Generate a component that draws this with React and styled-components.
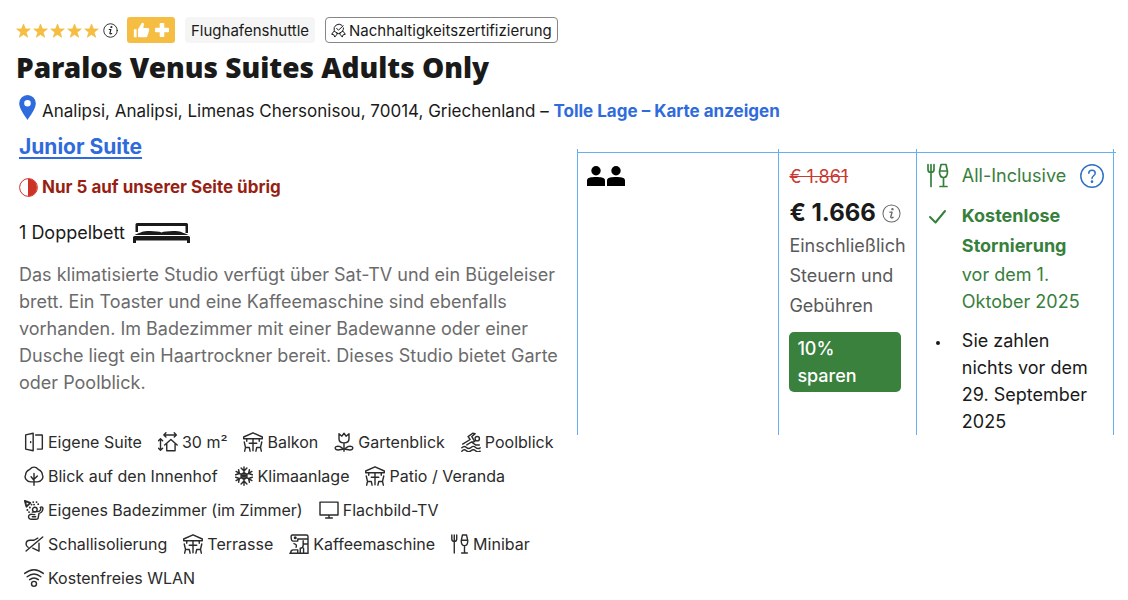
import React from 'react';
import styled, { createGlobalStyle } from 'styled-components';

const GlobalStyle = createGlobalStyle`
  * {
    box-sizing: border-box;
  }

  body {
    margin: 0;
    background: #fff;
    color: #1a1a1a;
    font-family: Inter, "Liberation Sans", sans-serif;
    font-size: 16px;
  }
`;

const Page = styled.main`
  padding: 16px 12px 12px 16px;
`;

const Badges = styled.div`
  display: flex;
  align-items: center;
  height: 28px;
`;

const Stars = styled.div`
  display: flex;
  gap: 2px;
`;

const IconButton = styled.button`
  display: inline-flex;
  flex: none;
  margin: 0;
  padding: 0;
  border: 0;
  background: none;
  color: ${({ $color }) => $color || '#1a1a1a'};
  cursor: pointer;
`;

const StarInfo = styled(IconButton)`
  margin: 0 9px 0 4px;
`;

const Preferred = styled.span`
  display: flex;
  align-items: center;
  gap: 5px;
  height: 26px;
  padding: 0 6px;
  border-radius: 3px;
  background: #f5bd41;
  color: #fff;
`;

const Tag = styled.span`
  display: flex;
  align-items: center;
  gap: 3px;
  height: 26px;
  margin-left: 10px;
  padding: 0 5px;
  border: 1px solid ${({ $outlined }) => ($outlined ? '#868686' : '#f5f5f5')};
  border-radius: 4px;
  background: ${({ $outlined }) => ($outlined ? '#fff' : '#f5f5f5')};
  font-size: 15px;
  white-space: nowrap;
`;

const HotelName = styled.h1`
  margin: 4px 0 0;
  font-family: "Noto Sans", sans-serif;
  font-size: 28px;
  font-weight: 900;
  line-height: 38px;
`;

const Address = styled.p`
  display: flex;
  align-items: flex-start;
  gap: 6px;
  margin: 9px 0 0;
  padding-left: 3px;
  font-size: 17px;
  line-height: 32px;
  white-space: nowrap;
`;

const MapLink = styled.a`
  color: #2f6bdc;
  font-weight: 700;
  text-decoration: none;
`;

const Columns = styled.div`
  display: grid;
  grid-template-columns: minmax(0, 546fr) minmax(0, 539fr);
  gap: 15px;
  margin-top: 6px;
`;

const Room = styled.section`
  padding-left: 3px;
`;

const RoomName = styled.h2`
  margin: 0;
  font-size: 21px;
  font-weight: 700;
  line-height: 28px;

  a {
    color: #2f6bdc;
    text-decoration-thickness: 2px;
    text-underline-offset: 3px;
  }
`;

const Scarcity = styled.p`
  display: flex;
  align-items: center;
  gap: 4px;
  margin: 14px 0 0;
  color: #971f14;
  font-size: 17px;
  font-weight: 700;
  line-height: 24px;
`;

const Bed = styled.p`
  display: flex;
  align-items: center;
  gap: 8px;
  margin: 21px 0 0;
  font-size: 18px;
  line-height: 26px;
`;

const Description = styled.p`
  margin: 15px 0 0;
  color: #6b6b6b;
  font-size: 18px;
  line-height: 27px;
  white-space: pre;
`;

const Amenities = styled.ul`
  display: flex;
  flex-wrap: wrap;
  column-gap: 16px;
  row-gap: 10px;
  margin: 34px 0 0;
  padding: 0 0 0 5px;
  list-style: none;
`;

const Amenity = styled.li`
  display: flex;
  align-items: center;
  gap: 4px;
  color: #2b2b2b;
  font-size: 16px;
  line-height: 24px;
  white-space: nowrap;
`;

const Offer = styled.table`
  width: 100%;
  height: 284px;
  margin-top: 16px;
  padding-right: 2px;
  border-spacing: 0;
  table-layout: fixed;
  background: linear-gradient(#66aff7, #66aff7) 0 3px / 100% 1px no-repeat;
`;

const Cell = styled.td`
  width: ${({ $width }) => $width || 'auto'};
  padding: ${({ $pad }) => $pad};
  border-left: 1px solid #66aff7;
  vertical-align: top;

  &:last-child {
    border-right: 1px solid #66aff7;
  }
`;

const Guests = styled.div`
  display: flex;
  gap: 2px;
`;

const OldPrice = styled.s`
  display: block;
  color: #c93a33;
  font-size: 18px;
  line-height: 24px;
`;

const Price = styled.div`
  display: flex;
  align-items: center;
  gap: 6px;
  margin-top: 10px;
  font-size: 24px;
  font-weight: 700;
  line-height: 28px;
  white-space: nowrap;
`;

const Taxes = styled.div`
  margin-top: 4px;
  color: #595959;
  font-size: 18px;
  line-height: 30px;
`;

const Saving = styled.div`
  margin: 11px 5px 0 0;
  padding: 3px 8px;
  border-radius: 5px;
  background: #3a813e;
  color: #fff;
  font-size: 18px;
  font-weight: 500;
  line-height: 27px;
`;

const Conditions = styled.ul`
  display: grid;
  gap: 12px;
  margin: 0;
  padding: 0;
  list-style: none;
`;

const Condition = styled.li`
  display: grid;
  grid-template-columns: 22px minmax(0, 1fr);
  column-gap: 13px;
  justify-items: start;
  color: ${({ $plain }) => ($plain ? '#1a1a1a' : '#37803b')};
  font-size: 18px;
  line-height: 27px;

  > svg {
    margin-top: 1px;
  }

  b {
    display: block;
    line-height: 30px;
  }
`;

const Meal = styled.div`
  display: flex;
  align-items: center;
  justify-content: space-between;
  width: 100%;
  white-space: nowrap;
`;

const Bullet = styled.span`
  justify-self: center;
  width: 4px;
  height: 4px;
  margin-top: 14px;
  border-radius: 50%;
  background: #1a1a1a;
`;

const Icon = ({ size = 20, width, height, box = '0 0 24 24', stroke = 1.7, children }) => (
  <svg
    width={width || size}
    height={height || size}
    viewBox={box}
    fill="none"
    stroke="currentColor"
    strokeWidth={stroke}
    strokeLinecap="round"
    strokeLinejoin="round"
    aria-hidden="true"
  >
    {children}
  </svg>
);

const StarIcon = () => (
  <svg width="15" height="15" viewBox="1 1 22 21" fill="#f5bd41" stroke="#f5bd41" strokeLinejoin="round" aria-hidden="true">
    <path d="M12 17.3 18.2 21.5 16 14.2 22 9.2H14.9L12 2 9.1 9.2H2l6 5L5.8 21.5z" />
  </svg>
);

const InfoIcon = ({ size, stroke = 1.4 }) => (
  <Icon size={size} stroke={stroke}>
    <circle cx="12" cy="12" r="10.8" />
    <path d="M10 10.300h2.700l-1.600 6c-.2 1.200.8 1.500 2.800.5" strokeWidth="1.800" />
    <circle cx="13.200" cy="6.500" r=".9" fill="currentColor" />
  </Icon>
);

const ThumbIcon = () => (
  <svg width="17" height="16" viewBox="0 0 24 23" fill="currentColor" aria-hidden="true">
    <path d="M1 10.5h4V22H1zM7 21.500V10.500L12 2c.3-1 3.500-1.400 3.500 1.500 0 2-.7 3.700-1 5.300h6.700c1.800 0 2.300 1.700 1.800 3.200l-2.500 8c-.5 1.500-1 2-2.500 2H10z" />
  </svg>
);

const PlusIcon = () => (
  <svg width="14" height="14" viewBox="0 0 14 14" fill="currentColor" aria-hidden="true">
    <path d="M5.500 0h3a.8.8 0 0 1 .8.800V4.700h3.900a.8.8 0 0 1 .8.800v3a.8.8 0 0 1-.8.800H9.300v3.900a.8.8 0 0 1-.8.800h-3a.8.8 0 0 1-.8-.8V9.300H.8a.8.8 0 0 1-.8-.8v-3a.8.8 0 0 1 .8-.8h3.900V.8a.8.8 0 0 1 .8-.8z" />
  </svg>
);

const CertificateIcon = () => (
  <Icon size={15} stroke={1.6}>
    <path d="M17.500 3.500A8 8 0 0 0 5 12M20 8a8 8 0 0 1-1.500 5M9 16.500a8 8 0 0 0 6 0M9 8.500l3 3L19.500 4.500" />
    <path d="M4.500 13.500 1 18l3.500.8L6 22.500l4.500-5.500zM19.500 13.500 23 18l-3.500.8-1.500 3.700-4.500-5.500z" />
  </Icon>
);

const PinIcon = () => (
  <svg width="17" height="25" viewBox="0 0 17 25" fill="#2f6bdc" aria-hidden="true">
    <path fillRule="evenodd" d="M8.500 0A8.300 8.300 0 0 1 16.800 8.500C16.800 14 11 21 8.500 25 6 21 .2 14 .2 8.500A8.300 8.300 0 0 1 8.500 0zm0 5a3.300 3.300 0 1 0 0 6.600 3.300 3.300 0 0 0 0-6.600z" />
  </svg>
);

const HalfIcon = () => (
  <svg width="19" height="19" viewBox="0 0 19 19" aria-hidden="true">
    <circle cx="9.500" cy="9.500" r="8.900" fill="#fff" stroke="#cc3326" />
    <path d="M9 0.500a9 9 0 0 1 0 18z" fill="#cc3326" />
  </svg>
);

const BedIcon = () => (
  <svg width="57" height="20" viewBox="0 0 57 20" fill="#1a1a1a" aria-hidden="true">
    <path fillRule="evenodd" d="M4 0h49.500q1.500 0 1.500 1.500V10h-2.500V3H5v6H2.500V1.500Q2.500 0 4 0z" />
    <path d="M1.500 12C8 9.500 9 8 17 8q8 0 11.500 1.500Q32 8 40 8c8 0 9 1.500 15.500 4z" />
    <path d="M1.500 13h54q1.500 0 1.500 1.500V20h-3v-2.500H3V20H0v-5.500Q0 13 1.500 13z" />
  </svg>
);

const PersonIcon = () => (
  <svg width="18" height="20" viewBox="0 0 18 20" fill="#000" aria-hidden="true">
    <circle cx="9" cy="4.700" r="4.700" />
    <path d="M0 20v-5.500C0 11.500 4 11 9 11s9 .5 9 3.500V20z" />
  </svg>
);

const CutleryIcon = ({ width = 18, height = 20, stroke }) => (
  <Icon width={width} height={height} box="0 0 22 24" stroke={stroke}>
    <path d="M1 1v5q0 3 3 3t3-3V1M4 1v22M14 1h5l1.500 7q0 6-4 6t-4-6zM13 7.500h7M16.500 14v9M13 23h7" />
  </Icon>
);

const CheckIcon = () => (
  <Icon width={22} height={27} box="0 0 22 27" stroke={2}>
    <path d="m3 15 5.500 5.500L18 9" />
  </Icon>
);

const HelpIcon = () => (
  <Icon size={24} stroke={1.5}>
    <circle cx="12" cy="12" r="11.200" />
    <path d="M8.800 9.200C8.800 5.200 15.200 5.200 15.200 9.200c0 2.600-3.200 2.600-3.200 5.300" />
    <circle cx="12" cy="17.700" r=".6" fill="currentColor" />
  </Icon>
);

const drawings = {
  door: (
    <path d="M2 3.500 11 1.500v21l-9-2zM14 3.500h7.500q.5 0 .5.500v16q0 .5-.5.500H16M8 11.500v1" />
  ),
  size: (
    <path d="M7 3.500h15M9.500 1 7 3.500 9.500 6M19.500 1 22 3.500 19.500 6M3 8v14M.500 10.500 3 8l2.500 2.500M.500 19.500 3 22l2.500-2.500M8 15.500 15.500 9 23 15.500M10.500 14v8.500h10V14" />
  ),
  patio: (
    <path d="M.800 6 12 1l11.200 5v2H.800zM12 8v14.500M7.500 13.500h9M1.500 12l1.500 6.500h4.500l1 4.500M3 18.500 2 23M22.500 12 21 18.500h-4.500l-1 4.500M21 18.500l1 4.500M4.500 8v3M19.500 8v3" />
  ),
  flower: (
    <>
      <path d="M6 2v6q0 5 6 5t6-5V2l-3.500 3L12 1.500 9.500 5zM12 13v10" />
      <path d="M12 20.500c-3 0-2.500-3.500-7-3.500-5 0-4.500 4.500 0 4.500 3 0 4-1 7-1zM12 20.500c3 0 2.500-3.500 7-3.500 5 0 4.500 4.500 0 4.500-3 0-4-1-7-1z" />
    </>
  ),
  pool: (
    <>
      <circle cx="19.500" cy="8" r="2.600" />
      <path d="M2 14.500 11 9 8.500 5.500 14 1.500l3 .5-4 3.500 3.500 6-4 .5L7 15.500M1 19q2.800-3 5.500-.5t5.500 0 5.500 0T23 19M1 23q2.800-3 5.500-.5t5.500 0 5.500 0T23 23M12.500 12l5 3.500H22" />
    </>
  ),
  tree: (
    <path d="M12 23V9M12 17l-3.500-4M12 16l4-4M8 19c-5 0-8-5-6-8.500C2 6 5 5 7 4c3-3.500 7-3.500 10 0 2 1 5 2 5 6.500 2 3.500-1 8.500-6 8.500z" />
  ),
  snow: (
    <path d="M12 1v22M2.500 6.500l19 11M21.500 6.500l-19 11M8.500 2.500 12 6l3.500-3.500M8.500 21.500 12 18l3.500 3.500M2 10.500 6.500 9 5.500 4.500M22 13.500 17.500 15l1 4.500M22 10.500 17.500 9l1-4.500M2 13.500 6.500 15l-1 4.500M12 8l3.500 2v4L12 16l-3.500-2v-4z" />
  ),
  bath: (
    <>
      <circle cx="13" cy="11.500" r="2.800" />
      <path d="M1 1l6.500 2.500L3 8zM11 2.500h.1M15 2.500h.1M12 5.500h.1M4 12h.1M7 9h.1M6 14.500h.1M17 5h.1M9 5.500h.1" strokeWidth="2.200" />
      <path d="M19.500 9c1.500-1.500 3.500-.5 3.200 1.500-.4 3.500-2.200 5-4.700 5.500l-1 5.500q0 1.500-3 1.500H9c-5 0-4.500-6 0-5.800l4 .3M20 9.500c.5 2.500-1 4-4 4.500l-6 .5M10 20h4" />
    </>
  ),
  tv: <path d="M1.200 2.500h21.600v15.500H1.200zM12 18v3.500M8 21.500h8" />,
  mute: (
    <path d="M22.500 3.500 2.500 20.500M16.500 5 12 7.500H7.500Q2.500 7.500 2.500 12q0 3 2.500 4M10.500 17l7.500 3.500V11" />
  ),
  coffee: (
    <>
      <path d="M4 1.200h17q1.800 0 1.800 1.800v20H13.500v-6q3.500 0 3.500-3.500V8M2.500 3q0 5.500 2.500 5.500h5.500V6H22.500M17 12h5.500M2 23q0-4 3-4h5.500v4zM1 23h22M6 11.500q4 1 2.500 4.500M17.500 17v6M2.500 3q0-1.800 1.500-1.800" />
      <circle cx="7.500" cy="4.500" r="1" fill="currentColor" />
    </>
  ),
  wifi: (
    <>
      <circle cx="12" cy="19" r="3" />
      <path d="M.800 6.500q11.200-9 22.400 0M3.800 10.500q8.200-6.500 16.400 0M6.800 14q5.200-4 10.400 0" />
    </>
  ),
};

const amenities = [
  ['door', 'Eigene Suite'],
  ['size', '30 m²'],
  ['patio', 'Balkon'],
  ['flower', 'Gartenblick'],
  ['pool', 'Poolblick'],
  ['tree', 'Blick auf den Innenhof'],
  ['snow', 'Klimaanlage'],
  ['patio', 'Patio / Veranda'],
  ['bath', 'Eigenes Badezimmer (im Zimmer)'],
  ['tv', 'Flachbild-TV'],
  ['mute', 'Schallisolierung'],
  ['patio', 'Terrasse'],
  ['coffee', 'Kaffeemaschine'],
  ['cutlery', 'Minibar'],
  ['wifi', 'Kostenfreies WLAN'],
];

const description = [
  'Das klimatisierte Studio verfügt über Sat-TV und ein Bügeleiser',
  'brett. Ein Toaster und eine Kaffeemaschine sind ebenfalls',
  'vorhanden. Im Badezimmer mit einer Badewanne oder einer',
  'Dusche liegt ein Haartrockner bereit. Dieses Studio bietet Garte',
  'oder Poolblick.',
].join('\n');

const Header = () => (
  <header>
    <Badges>
      <Stars role="img" aria-label="5 Sterne">
        {[1, 2, 3, 4, 5].map((n) => <StarIcon key={n} />)}
      </Stars>
      <StarInfo type="button" aria-label="Info zur Bewertung">
        <InfoIcon size={15} />
      </StarInfo>
      <Preferred>
        <ThumbIcon />
        <PlusIcon />
      </Preferred>
      <Tag>Flughafenshuttle</Tag>
      <Tag $outlined>
        <CertificateIcon />
        Nachhaltigkeitszertifizierung
      </Tag>
    </Badges>
    <HotelName>Paralos Venus Suites Adults Only</HotelName>
    <Address>
      <PinIcon />
      <span>
        Analipsi, Analipsi, Limenas Chersonisou, 70014, Griechenland –{' '}
        <MapLink href="#map">Tolle Lage – Karte anzeigen</MapLink>
      </span>
    </Address>
  </header>
);

const RoomDetails = () => (
  <Room>
    <RoomName><a href="#room">Junior Suite</a></RoomName>
    <Scarcity>
      <HalfIcon />
      Nur 5 auf unserer Seite übrig
    </Scarcity>
    <Bed>
      1 Doppelbett
      <BedIcon />
    </Bed>
    <Description>{description}</Description>
    <Amenities>
      {amenities.map(([icon, label]) => (
        <Amenity key={label}>
          {icon === 'cutlery' ? <CutleryIcon /> : <Icon>{drawings[icon]}</Icon>}
          {label}
        </Amenity>
      ))}
    </Amenities>
  </Room>
);

const OfferTable = () => (
  <Offer>
    <tbody>
      <tr>
        <Cell $pad="17px 9px" $width="37.5%">
          <Guests role="img" aria-label="2 Personen">
            <PersonIcon />
            <PersonIcon />
          </Guests>
        </Cell>
        <Cell $pad="16px 10px 0" $width="25.6%">
          <OldPrice>€ 1.861</OldPrice>
          <Price>
            € 1.666
            <IconButton type="button" $color="#6b6b6b" aria-label="Preisdetails">
              <InfoIcon size={19} stroke={1.3} />
            </IconButton>
          </Price>
          <Taxes>Einschließlich Steuern und Gebühren</Taxes>
          <Saving>10%<br />sparen</Saving>
        </Cell>
        <Cell $pad="13px 9px 0 10px">
          <Conditions>
            <Condition>
              <CutleryIcon width={22} height={25} />
              <Meal>
                All-Inclusive
                <IconButton type="button" $color="#3071c4" aria-label="Hilfe">
                  <HelpIcon />
                </IconButton>
              </Meal>
            </Condition>
            <Condition>
              <CheckIcon />
              <div>
                <b>Kostenlose Stornierung</b>
                vor dem 1. Oktober 2025
              </div>
            </Condition>
            <Condition $plain>
              <Bullet />
              <span>Sie zahlen nichts vor dem 29. September 2025</span>
            </Condition>
          </Conditions>
        </Cell>
      </tr>
    </tbody>
  </Offer>
);

const App = () => (
  <>
    <GlobalStyle />
    <Page>
      <Header />
      <Columns>
        <RoomDetails />
        <OfferTable />
      </Columns>
    </Page>
  </>
);

export default App;
